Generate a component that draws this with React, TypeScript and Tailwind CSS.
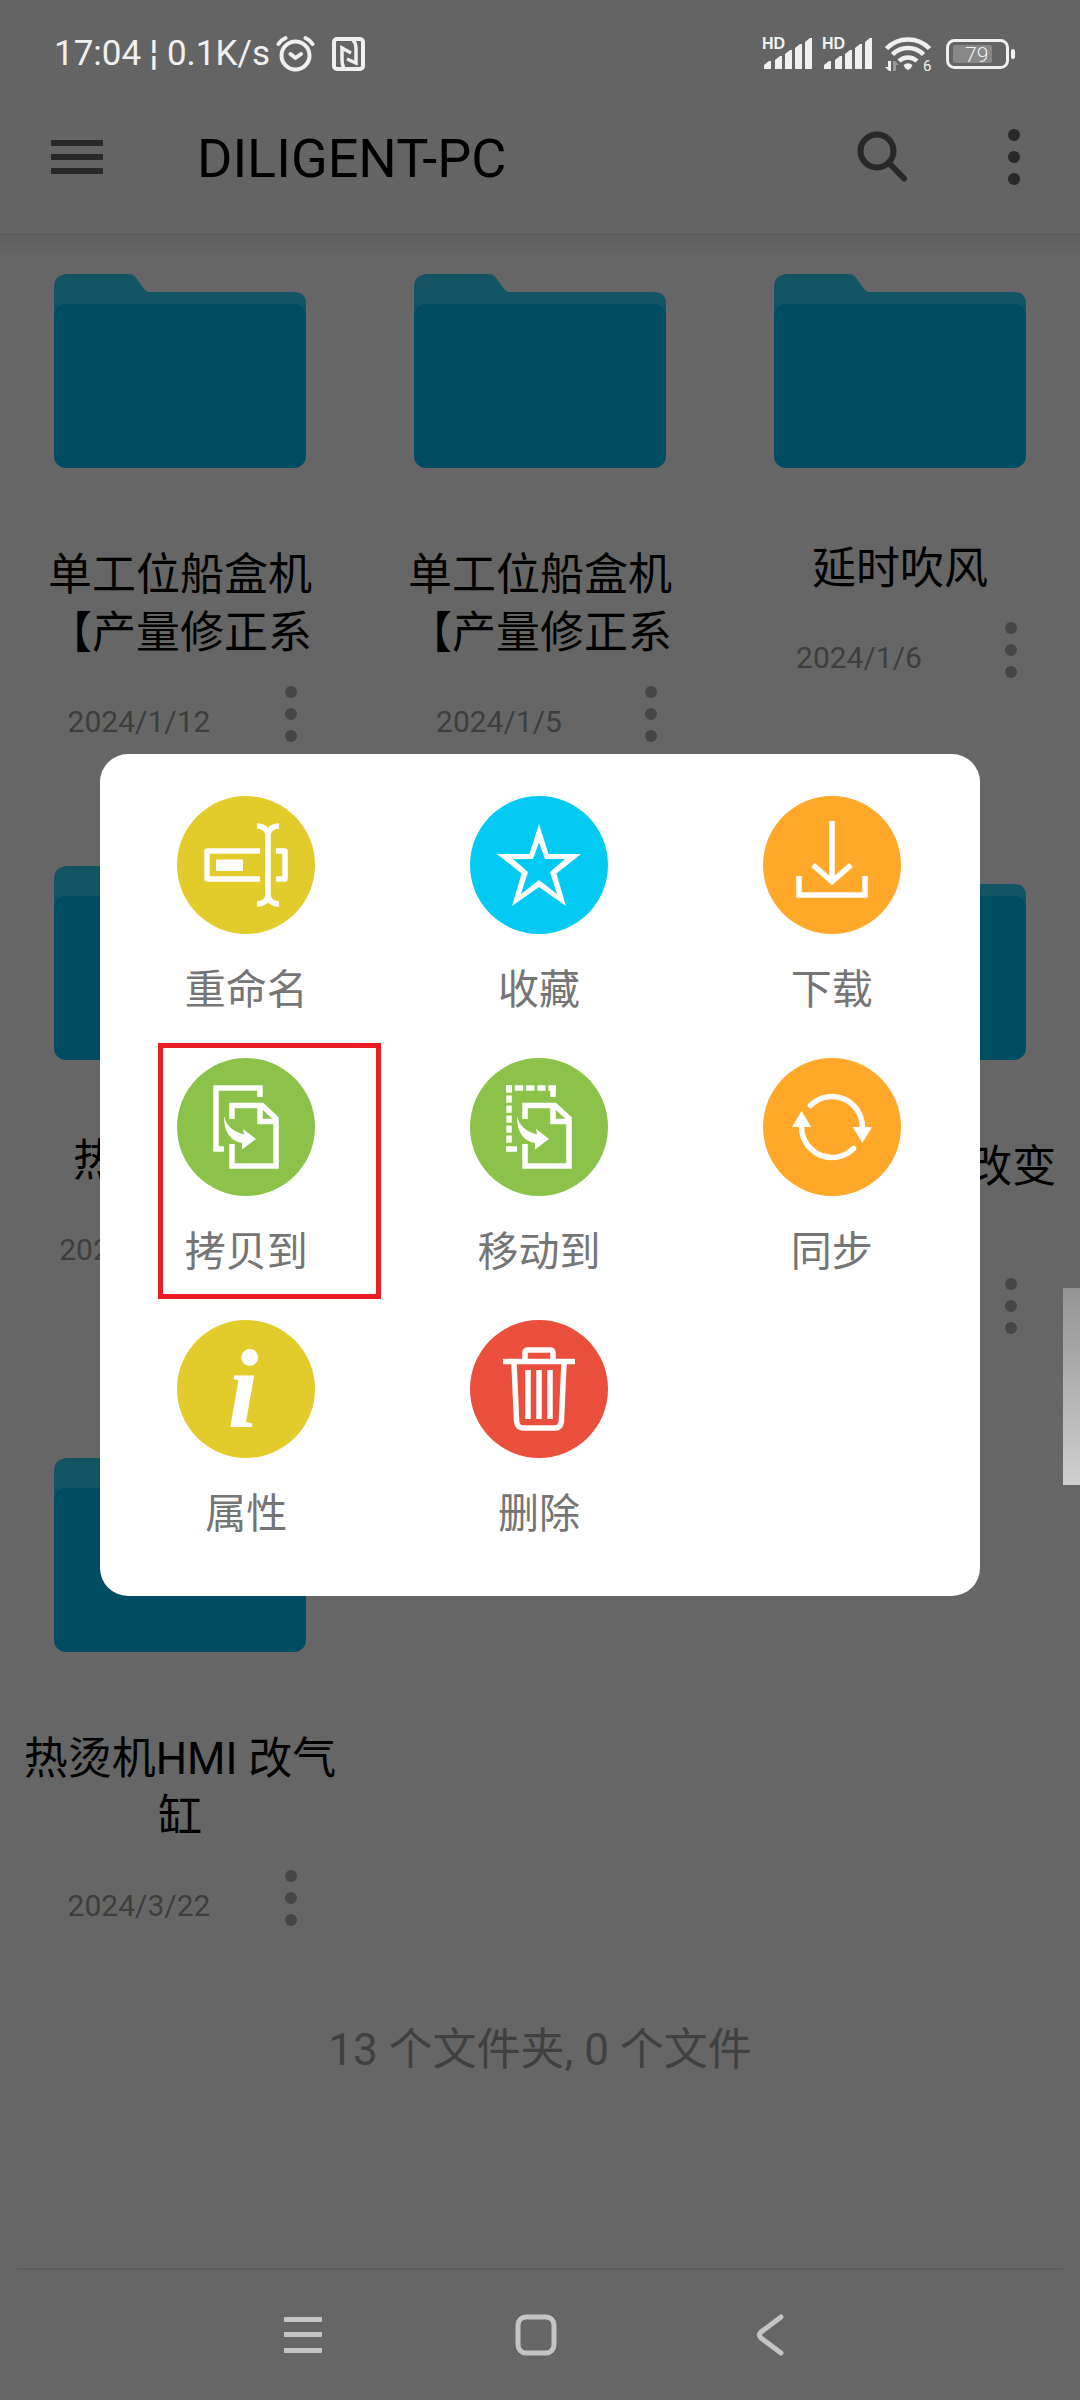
import type { ReactNode } from 'react';

type FolderItem = {
  name: string;
  date?: string;
};

type Action = {
  label: string;
  color: string;
  icon: ReactNode;
  highlighted?: boolean;
};

const folders: FolderItem[] = [
  { name: '单工位船盒机\n【产量修正系', date: '2024/1/12' },
  { name: '单工位船盒机\n【产量修正系', date: '2024/1/5' },
  { name: '延时吹风', date: '2024/1/6' },
  { name: '热烫机HMI', date: '2024/12/10' },
  { name: '热烫机' },
  { name: '热烫机HMI 改变\n\u00a0' },
  { name: '热烫机HMI 改气\n缸', date: '2024/3/22' },
];

// front page and curved arrow, shared by copy and move
const PageWithArrow = () => (
  <>
    <path d="M55 61V47.5H85L99 60.5V108H55V86" />
    <path d="M83 48V63.5H100" />
    <path
      d="M47 58Q50 72 67 76.5L66 71L79 81L65 91.5V85Q47 82 47 58Z"
      fill="white"
      stroke="none"
    />
  </>
);

const actions: Action[] = [
  {
    label: '重命名',
    color: 'bg-[#e2cb2b]',
    icon: (
      <>
        <path d="M83 55H30V83H83M99 55H108V83H99" strokeLinejoin="round" />
        <rect x="39" y="63.5" width="27" height="11.5" fill="white" stroke="none" />
        <path d="M80 30Q89 30 91 38Q93 30 102 30M91 36V102M80 108Q89 108 91 100Q93 108 102 108" />
      </>
    ),
  },
  {
    label: '收藏',
    color: 'bg-[#03caf3]',
    icon: (
      <path
        fill="white"
        stroke="none"
        fillRule="evenodd"
        d="M69 28L78.5 58H111L86.400 77.500L96 110L69 91L42 110L51.600 77.500L27 58H59.500ZM69 46.500L63 63H43L58 76L51 98L69 84L87 98L80 76L95 63H75Z"
      />
    ),
  },
  {
    label: '下载',
    color: 'bg-[#ffa829]',
    icon: <path d="M69 25V86M50 69L69 85.500L88 69M36 80V99H102V80" />,
  },
  {
    label: '拷贝到',
    color: 'bg-[#8bc34a]',
    highlighted: true,
    icon: (
      <>
        <path d="M83 39V30H39V91H47" />
        <PageWithArrow />
      </>
    ),
  },
  {
    label: '移动到',
    color: 'bg-[#8bc34a]',
    icon: (
      <>
        <path d="M36 30H86" strokeDasharray="8.4 2.8" strokeDashoffset="2.4" />
        <path d="M39 27.500V86" strokeDasharray="7.2 2.8" />
        <path d="M36 91H47M83 28V39" />
        <PageWithArrow />
      </>
    ),
  },
  {
    label: '同步',
    color: 'bg-[#ffa829]',
    icon: (
      <>
        <path d="M47.500 47.500A30.400 30.400 0 0 1 99.400 69M90.500 90.500A30.400 30.400 0 0 1 38.600 69" strokeLinecap="round" />
        <path d="M89.700 69H109L99.400 85ZM29 69H48.300L38.600 53Z" fill="white" stroke="none" />
      </>
    ),
  },
  {
    label: '属性',
    color: 'bg-[#e2cb2b]',
    icon: (
      <text
        x="66"
        y="107"
        fontSize="112"
        textAnchor="middle"
        fill="white"
        stroke="none"
        className="font-['Liberation_Serif',serif] font-bold italic"
      >
        i
      </text>
    ),
  },
  {
    label: '删除',
    color: 'bg-[#e94f3c]',
    icon: (
      <>
        <path d="M33 41.500H105M55 41V33Q55 30 58 30H80Q83 30 83 33V41" />
        <path d="M44 43L46.600 101Q47 108 53 108H85Q91 108 91.400 101L94 43" />
        <path d="M58 50V99M69 50V99M80 50V99" />
      </>
    ),
  },
];

const Signal = () => (
  <svg className="h-[34px] w-[50px] overflow-visible" viewBox="0 0 50 34" fill="#f0f0f0" aria-hidden="true">
    <text x="0" y="12" fontSize="16" className="font-['Liberation_Sans',sans-serif] font-bold">
      HD
    </text>
    <path d="M2 28L7 24H9V32H2ZM13 23L18 19H20V32H13ZM23 17L28 13H30V32H23ZM33 11L38 7H40V32H33ZM43 5L48 1H50V32H43Z" />
  </svg>
);

const StatusBar = () => (
  <div className="flex h-[82px] items-center justify-between bg-[#646464] pt-[26px] pr-[65px] pl-[54px] text-[#f0f0f0]">
    <div className="flex items-center">
      <span className="text-[35px] leading-10">17:04 ¦ 0.1K/s</span>
      <svg className="ml-1.5 h-[38px] w-10" viewBox="0 0 40 38" fill="none" stroke="#f0f0f0" strokeWidth="4" strokeLinecap="round" aria-hidden="true">
        <circle cx="19.500" cy="20.500" r="14" />
        <path d="M2.500 9Q5 5 9.500 3M29.500 3Q34 5 36.500 9M14.500 19L19.500 23L25 19" strokeLinejoin="round" />
      </svg>
      <svg className="ml-4 h-[34px] w-[33px]" viewBox="0 0 33 34" fill="none" stroke="#f0f0f0" strokeWidth="4" aria-hidden="true">
        <rect x="2" y="2" width="29" height="30" rx="3" />
        <path d="M12 31Q10 28 10 22V11L19 16M15 22L24 26V12Q24 6 21 3" strokeWidth="3.500" />
      </svg>
    </div>
    <div className="flex items-center gap-[10px]">
      <Signal />
      <Signal />
      <svg className="h-9 w-[52px] overflow-visible" viewBox="-3 0 52 36" fill="none" stroke="#f0f0f0" strokeWidth="4.500" aria-hidden="true">
        <path d="M1.500 12.500A30 30 0 0 1 44.500 12.500M7.500 18.500A22 22 0 0 1 38.500 18.500M14 25A13 13 0 0 1 32 25" />
        <path d="M18.500 29Q23 25.500 27.500 29Q26 33 23 34Q20 33 18.500 29Z" fill="#f0f0f0" stroke="none" />
        <path d="M3 25H6V35H4L0 31H3Z" fill="#f0f0f0" stroke="none" />
        <path d="M8 25H10L14 29H11V35H8Z" fill="#999999" stroke="none" />
        <text x="38" y="35" fontSize="15" fill="#f0f0f0" stroke="none">
          6
        </text>
      </svg>
      <svg className="h-[30px] w-[71px]" viewBox="-2 0 71 30" fill="none" aria-hidden="true">
        <rect x="1.500" y="1.500" width="60" height="27" rx="7" stroke="#f0f0f0" strokeWidth="3" />
        <rect x="7" y="6" width="39" height="18" rx="2" fill="#888888" />
        <text x="19" y="23" fontSize="21" fill="#f0f0f0" className="font-light">
          79
        </text>
        <rect x="65" y="10" width="4" height="10" rx="2" fill="#f0f0f0" />
      </svg>
    </div>
  </div>
);

const Dots = ({ color }: { color: string }) => (
  <svg className="h-14 w-3" viewBox="0 0 12 56" fill={color} aria-hidden="true">
    <circle cx="6" cy="6" r="6" />
    <circle cx="6" cy="28" r="6" />
    <circle cx="6" cy="50" r="6" />
  </svg>
);

const Header = () => (
  <header className="flex h-[153px] items-center border-b-2 border-[#5d5d5d] bg-[#646464] pr-[60px] pb-0.5 pl-[51px]">
    <button type="button" aria-label="菜单">
      <svg className="h-[34px] w-[52px]" viewBox="0 0 52 34" fill="#282828" aria-hidden="true">
        <path d="M0 0H52V6H0ZM0 14H52V20H0ZM0 28H52V34H0Z" />
      </svg>
    </button>
    <h1 className="ml-[94px] flex-1 pt-1 text-[54px] leading-16 text-black">DILIGENT-PC</h1>
    <button type="button" aria-label="搜索" className="mr-[99px]">
      <svg className="h-[52px] w-[52px]" viewBox="0 0 52 52" fill="none" stroke="#282828" strokeWidth="6" aria-hidden="true">
        <circle cx="20" cy="20" r="16.500" />
        <path d="M32 32L47 47.500" strokeLinecap="round" />
      </svg>
    </button>
    <button type="button" aria-label="更多">
      <Dots color="#282828" />
    </button>
  </header>
);

const Folder = ({ name, date }: FolderItem) => (
  <li className="flex flex-col">
    <svg className="w-[70%] self-center" viewBox="0 0 252 194" aria-hidden="true">
      <path d="M0 14Q0 0 14 0H74Q79 0 82 4L91 16Q93 18 96 18H240Q252 18 252 30V60H0Z" fill="#125463" />
      <rect y="30" width="252" height="164" rx="12" fill="#004d61" />
    </svg>
    <p
      className={`mt-[72px] text-center text-[44px] leading-[58px] whitespace-pre-line text-black ${
        name.includes('\n') ? 'pt-1.5' : ''
      }`}
    >
      {name}
    </p>
    <div className="flex h-[104px] items-center pr-12 pl-2">
      <span className="flex-1 pt-4 text-center text-[30px] leading-9 text-[#3d3d3d]">{date}</span>
      <button type="button" aria-label={`${name} 更多`} className="flex w-[42px] justify-center">
        <Dots color="#464646" />
      </button>
    </div>
  </li>
);

const ActionButton = ({ label, color, icon, highlighted }: Action) => (
  <div className="relative flex justify-center pb-10">
    <button type="button" className="flex flex-col items-center">
      <span className={`block size-[138px] rounded-full ${color}`}>
        <svg viewBox="0 0 138 138" fill="none" stroke="white" strokeWidth="5.500" aria-hidden="true">
          {icon}
        </svg>
      </span>
      <span className="mt-7 text-[41px] leading-14 text-[#757575]">{label}</span>
    </button>
    {highlighted && (
      <span className="pointer-events-none absolute -top-[15px] right-3 bottom-[21px] left-[58px] border-[5px] border-[#e91c24]" />
    )}
  </div>
);

const NavBar = () => (
  <nav className="mx-[17px] flex h-[132px] items-center justify-center gap-[184px] border-t-2 border-[#5e5e5e] pr-2">
    <button type="button" aria-label="最近任务">
      <svg className="size-12" viewBox="0 0 48 48" fill="#c4c4c4" aria-hidden="true">
        <rect x="4" y="6" width="38" height="5" rx="1" />
        <rect x="4" y="21" width="38" height="5" rx="1" />
        <rect x="4" y="37" width="38" height="5" rx="1" />
      </svg>
    </button>
    <button type="button" aria-label="主屏幕">
      <svg className="size-12" viewBox="0 0 48 48" fill="none" stroke="#c4c4c4" strokeWidth="5" aria-hidden="true">
        <rect x="6" y="6" width="36" height="36" rx="8" />
      </svg>
    </button>
    <button type="button" aria-label="返回">
      <svg className="size-12" viewBox="0 0 48 48" fill="none" stroke="#c4c4c4" strokeWidth="5" strokeLinecap="round" aria-hidden="true">
        <path d="M37 6L17 21Q14 24 17 27L37 42" />
      </svg>
    </button>
  </nav>
);

export default function App() {
  return (
    <div className="flex min-h-screen flex-col bg-[#666666] font-[Roboto,'Noto_Sans_CJK_SC',sans-serif]">
      <StatusBar />
      <Header />
      <main className="flex-1 bg-linear-to-b from-[#606060] to-[#666666] to-1% pt-[39px]">
        <ul className="grid grid-cols-3 gap-y-[100px]">
          {folders.map((folder, i) => (
            <Folder key={i} {...folder} />
          ))}
        </ul>
        <p className="mt-[68px] text-center text-[44px] leading-16 text-[#404040]">13 个文件夹, 0 个文件</p>
      </main>
      <NavBar />

      <div className="fixed inset-0 flex items-center px-[100px] pb-[50px]">
        <div role="dialog" aria-label="操作" className="grid w-full grid-cols-3 rounded-[28px] bg-white pt-[42px] pr-0.5 pb-3.5">
          {actions.map((action) => (
            <ActionButton key={action.label} {...action} />
          ))}
        </div>
      </div>

      {/* fast-scroll handle */}
      <div className="fixed top-[1288px] right-0 h-[197px] w-[17px] bg-linear-to-b from-[#949494] to-[#d0d0d0]" />
    </div>
  );
}
